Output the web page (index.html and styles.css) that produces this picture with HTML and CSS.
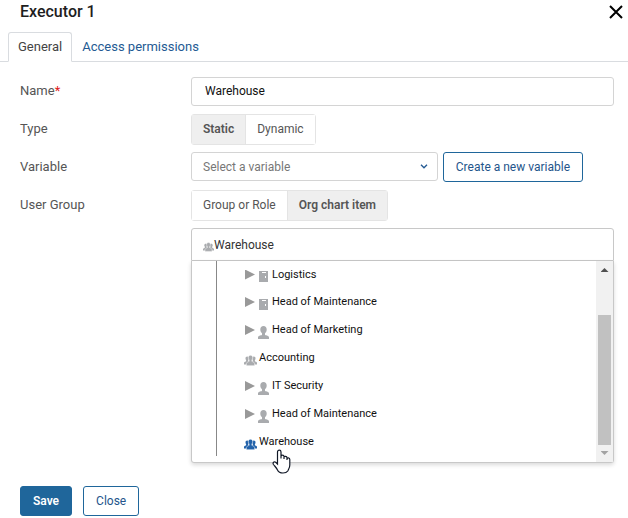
FILE: index.html
```html
<!DOCTYPE html>
<html lang="en">
<head>
<meta charset="utf-8">
<meta name="viewport" content="width=device-width, initial-scale=1">
<title>Executor 1</title>
<link rel="stylesheet" href="styles.css">
</head>
<body>
<svg class="sprite" aria-hidden="true">
  <symbol id="group" viewBox="0 0 13 11">
    <path d="M3.2 1.600c1 0 1.600.7 1.600 1.800 0 .7-.3 1.200-.6 1.600v.8l.7.4v3.300H0V8c0-.8.7-1 2.100-1.700V5c-.4-.4-.6-.9-.6-1.600 0-1.100.7-1.800 1.700-1.800ZM9.800 1.600c-1 0-1.600.7-1.600 1.800 0 .7.3 1.200.6 1.600v.8l-.7.4v3.300H13V8c0-.8-.7-1-2.100-1.700V5c.4-.4.6-.9.6-1.600 0-1.100-.7-1.800-1.700-1.800Z"/>
    <path class="front" d="M6.500.3c1.400 0 2.200.9 2.200 2.400 0 1-.3 1.700-.8 2.200v1.500c1.800.7 2.700 1.100 2.700 2.300v2H2.400v-2c0-1.200.9-1.600 2.700-2.300V4.900c-.5-.5-.8-1.200-.8-2.200C4.300 1.200 5.100.3 6.500.3Z"/>
  </symbol>
  <symbol id="person" viewBox="0 0 11 13">
    <path d="M5.500 0c2 0 3.200 1.300 3.200 3.500 0 1.700-.7 3-1.700 3.700v1.500c0 .6 3.700.9 4 2.300V13H0v-2c.3-1.400 4-1.700 4-2.300V7.200c-1-.7-1.700-2-1.700-3.700C2.300 1.300 3.500 0 5.500 0Z"/>
  </symbol>
  <symbol id="unit" viewBox="0 0 9 11">
    <path fill-rule="evenodd" d="M0 0h9v11H0ZM3 1v1h4V1ZM6 5v2h1V5Z"/>
  </symbol>
</svg>

<main class="dialog">
  <header class="head">
    <h1 class="title">Executor 1</h1>
    <button class="dismiss" type="button" aria-label="Close dialog">
      <svg viewBox="0 0 14 14" aria-hidden="true"><path d="M1 1l12 12M13 1L1 13"/></svg>
    </button>
  </header>

  <nav class="tabs">
    <a class="tab tab-active" href="#general" aria-current="page">General</a>
    <a class="tab" href="#access">Access permissions</a>
  </nav>

  <form class="form" id="general">
    <div class="row">
      <label class="label" for="name">Name<span class="required">*</span></label>
      <input class="field" id="name" type="text" value="Warehouse">
    </div>
    <div class="row">
      <span class="label" id="type-label">Type</span>
      <div class="segment" role="group" aria-labelledby="type-label">
        <button class="option option-on" type="button" aria-pressed="true">Static</button>
        <button class="option" type="button" aria-pressed="false">Dynamic</button>
      </div>
    </div>
    <div class="row">
      <label class="label" for="variable">Variable</label>
      <div class="variable">
        <div class="picker">
          <select class="field select" id="variable"><option>Select a variable</option></select>
          <svg class="chevron" viewBox="0 0 8 5" aria-hidden="true"><path d="M1 .8l3 3 3-3"/></svg>
        </div>
        <button class="button create" type="button">Create a new variable</button>
      </div>
    </div>
    <div class="row">
      <span class="label" id="user-label">User Group</span>
      <div class="segment" role="group" aria-labelledby="user-label">
        <button class="option" type="button" aria-pressed="false">Group or Role</button>
        <button class="option option-on" type="button" aria-pressed="true">Org chart item</button>
      </div>
    </div>

    <div class="chart">
      <button class="current" type="button" aria-expanded="true">
        <svg class="icon-small" aria-hidden="true"><use href="#group"/></svg>Warehouse
      </button>
      <div class="menu">
        <ul class="tree">
          <li class="node"><span class="arrow"></span><svg class="icon-unit" aria-hidden="true"><use href="#unit"/></svg>Logistics</li>
          <li class="node"><span class="arrow"></span><svg class="icon-unit" aria-hidden="true"><use href="#unit"/></svg>Head of Maintenance</li>
          <li class="node"><span class="arrow"></span><svg class="icon-person" aria-hidden="true"><use href="#person"/></svg>Head of Marketing</li>
          <li class="node"><svg class="icon-group" aria-hidden="true"><use href="#group"/></svg>Accounting</li>
          <li class="node"><span class="arrow"></span><svg class="icon-person" aria-hidden="true"><use href="#person"/></svg>IT Security</li>
          <li class="node"><span class="arrow"></span><svg class="icon-person" aria-hidden="true"><use href="#person"/></svg>Head of Maintenance</li>
          <li class="node node-on"><svg class="icon-group" aria-hidden="true"><use href="#group"/></svg>Warehouse
            <svg class="pointer" viewBox="0 0 19 25" aria-hidden="true"><path d="M5.500 15V3c0-2.500 3.500-2.500 3.500 0v6.500-2c0-1.800 3-1.800 3 0V10 8.500c0-1.800 3-1.500 3 .2V11 10c0-1.500 2.800-1.500 2.800.5V16c0 3-1.300 4-2 6-1 1.500-2 2-4.800 2s-4.500-.8-5.500-3c-1-2.200-2.500-3.500-4-5.500-1.200-1.800.6-3.500 2.200-2.200L5.500 15Z"/></svg>
          </li>
        </ul>
        <div class="scrollbar" aria-hidden="true">
          <span class="step step-up"></span>
          <span class="thumb"></span>
          <span class="step step-down"></span>
        </div>
      </div>
    </div>
  </form>

  <footer class="actions">
    <button class="button primary" type="button">Save</button>
    <button class="button" type="button">Close</button>
  </footer>
</main>
</body>
</html>
```
FILE: styles.css
```css
* { box-sizing: border-box; }

body {
  margin: 0;
  background: #fff;
  color: #555;
  font: 13px/18px Roboto, "Liberation Sans", sans-serif;
}

button, input, select { font: inherit; font-size: 12px; color: inherit; margin: 0; }

.sprite { position: absolute; width: 0; height: 0; }

.head {
  display: flex;
  justify-content: space-between;
  align-items: center;
  height: 32px;
  padding: 0 4px 8px 20px;
}

.title { margin: 0; font-size: 16px; font-weight: 500; color: #1e1e1e; }

.dismiss { width: 16px; height: 16px; padding: 1px; border: 0; background: none; }
.dismiss svg { display: block; width: 14px; height: 14px; fill: none; stroke: #000; stroke-width: 2; }

.tabs {
  display: flex;
  height: 30px;
  padding-left: 8px;
  border-bottom: 1px solid #d9dce0;
}

.tab {
  height: 30px;
  padding: 5px 9px;
  border: 1px solid transparent;
  color: #245a93;
  text-decoration: none;
  white-space: nowrap;
}

.tab-active {
  border-color: #d9dce0 #d9dce0 #fff;
  border-radius: 3px 3px 0 0;
  background: #fff;
  color: #444;
}

.form { padding: 10px 14px 0 20px; }

.row {
  display: grid;
  grid-template-columns: 171px 1fr;
  align-items: center;
  height: 38px;
}

.required { color: #e02020; }

.field {
  width: 100%;
  height: 29px;
  padding: 0 13px;
  border: 1px solid #d4d4d4;
  border-radius: 3px;
  background: #fff;
}

input.field { color: #111; }

.segment { display: flex; justify-self: start; height: 31px; border: 1px solid #e4e4e4; border-radius: 3px; }

.option {
  padding: 0 11px;
  border: 0;
  background: #fff;
  white-space: nowrap;
}
.option + .option { border-left: 1px solid #e4e4e4; }
.option-on { background: #efefef; font-weight: 600; }

.variable { display: flex; gap: 5px; padding-right: 31px; }
.picker { position: relative; flex: 1; min-width: 0; }
.select { appearance: none; padding: 0 11px; color: #777; }
.chevron { position: absolute; top: 12px; right: 10px; width: 8px; height: 5px; fill: none; stroke: #245a93; stroke-width: 1.3; }

.button {
  height: 30px;
  padding: 0 12px;
  border: 1px solid #1f669b;
  border-radius: 3px;
  background: #fff;
  color: #24558b;
  white-space: nowrap;
}
.create { flex: none; }
.primary { background: #1f669b; color: #fff; font-weight: 600; }

.chart { margin: 4px 0 0 171px; }

.current {
  display: flex;
  align-items: center;
  width: 100%;
  height: 33px;
  padding: 0 11px;
  border: 1px solid #c8c8c8;
  border-radius: 3px 3px 0 0;
  background: #fff;
  color: #333;
}

.menu {
  display: flex;
  border: 1px solid #c8c8c8;
  border-top: 0;
  border-radius: 0 0 3px 3px;
  box-shadow: 0 2px 4px rgba(0, 0, 0, .15);
}

.tree {
  flex: 1;
  margin: 0 0 6px 24px;
  padding: 0 0 0 28px;
  border-left: 1px solid #888;
  list-style: none;
  font-size: 11px;
  color: #111;
}

.node { display: flex; align-items: center; height: 28px; position: relative; }
.node:first-child { height: 27px; }

.arrow {
  width: 10px;
  height: 10px;
  margin-right: 4px;
  background: #999;
  clip-path: polygon(0 0, 100% 50%, 0 100%);
}

.node svg, .current svg { fill: #a9abae; flex: none; }
.front { stroke: #fff; stroke-width: .5; }
.icon-small { width: 11px; height: 10px; margin-top: 4px; }
.icon-unit { width: 9px; height: 11px; margin: 4px 4px 0 0; }
.icon-person { width: 11px; height: 13px; margin: 4px 3px 0 -1px; }
.icon-group { width: 13px; height: 11px; margin: 4px 2px 0 -1px; }
.node-on .icon-group { fill: #2262aa; }

.node .pointer {
  position: absolute;
  top: 21px;
  left: 27px;
  width: 19px;
  height: 25px;
  fill: #fff;
  stroke: #111827;
  stroke-width: 1.2;
}

.scrollbar {
  display: flex;
  flex-direction: column;
  align-items: center;
  width: 17px;
  padding: 7px 0;
  background: #f1f1f1;
}
.step { width: 8px; height: 4px; background: #505050; clip-path: polygon(50% 0, 100% 100%, 0 100%); }
.step-down { background: #a3a3a3; clip-path: polygon(0 0, 100% 0, 50% 100%); }
.thumb { flex: 1; width: 13px; margin: 43px 0 6px; background: #c1c1c1; }

.actions { display: flex; gap: 11px; padding: 23px 20px 2px; }
```
